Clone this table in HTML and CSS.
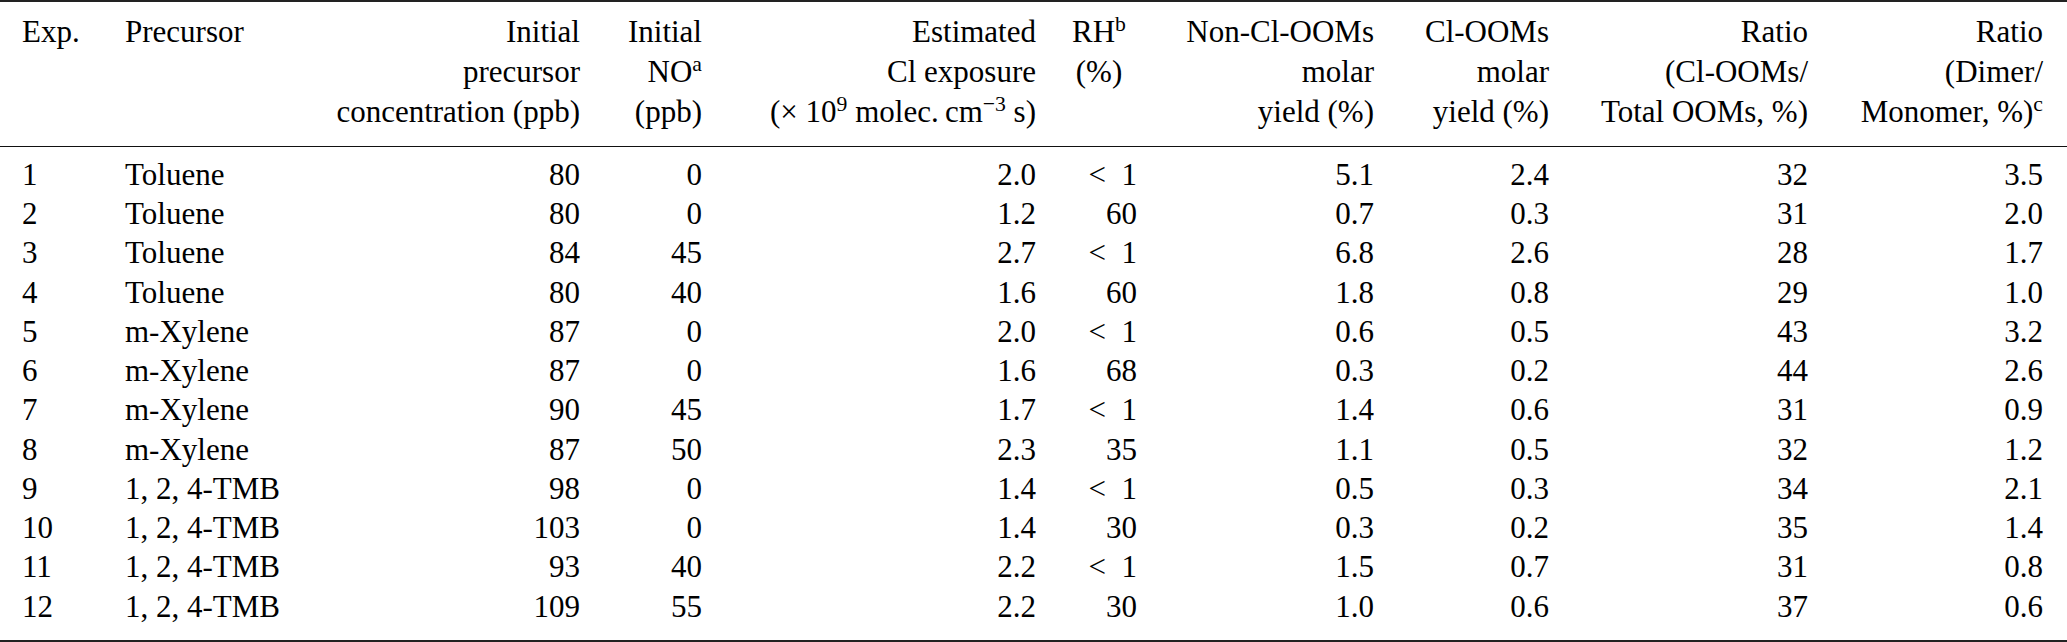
FILE: index.html
```html
<!DOCTYPE html>
<html lang="en">
<head>
<meta charset="utf-8">
<title>Table</title>
<link rel="stylesheet" href="styles.css">
</head>
<body>
<table class="tbl">
  <thead>
    <tr>
      <th class="c1 l">Exp.</th>
      <th class="c2 l">Precursor</th>
      <th class="c3">Initial<br>precursor<br>concentration (ppb)</th>
      <th class="c4">Initial<br>NO<sup>a</sup><br>(ppb)</th>
      <th class="c5">Estimated<br>Cl exposure<br>(× 10<sup>9</sup> molec.&#8201;cm<sup>−3</sup> s)</th>
      <th class="c6">RH<sup>b</sup><br>(%)</th>
      <th class="c7">Non-Cl-OOMs<br>molar<br>yield (%)</th>
      <th class="c8">Cl-OOMs<br>molar<br>yield (%)</th>
      <th class="c9">Ratio<br>(Cl-OOMs/<br>Total OOMs, %)</th>
      <th class="c10">Ratio<br>(Dimer/<br>Monomer, %)<sup>c</sup></th>
    </tr>
  </thead>
  <tbody>
    <tr><td class="l">1</td><td class="l">Toluene</td><td>80</td><td>0</td><td>2.0</td><td>&lt;&ensp;1</td><td>5.1</td><td>2.4</td><td>32</td><td>3.5</td></tr>
    <tr><td class="l">2</td><td class="l">Toluene</td><td>80</td><td>0</td><td>1.2</td><td>60</td><td>0.7</td><td>0.3</td><td>31</td><td>2.0</td></tr>
    <tr><td class="l">3</td><td class="l">Toluene</td><td>84</td><td>45</td><td>2.7</td><td>&lt;&ensp;1</td><td>6.8</td><td>2.6</td><td>28</td><td>1.7</td></tr>
    <tr><td class="l">4</td><td class="l">Toluene</td><td>80</td><td>40</td><td>1.6</td><td>60</td><td>1.8</td><td>0.8</td><td>29</td><td>1.0</td></tr>
    <tr><td class="l">5</td><td class="l">m-Xylene</td><td>87</td><td>0</td><td>2.0</td><td>&lt;&ensp;1</td><td>0.6</td><td>0.5</td><td>43</td><td>3.2</td></tr>
    <tr><td class="l">6</td><td class="l">m-Xylene</td><td>87</td><td>0</td><td>1.6</td><td>68</td><td>0.3</td><td>0.2</td><td>44</td><td>2.6</td></tr>
    <tr><td class="l">7</td><td class="l">m-Xylene</td><td>90</td><td>45</td><td>1.7</td><td>&lt;&ensp;1</td><td>1.4</td><td>0.6</td><td>31</td><td>0.9</td></tr>
    <tr><td class="l">8</td><td class="l">m-Xylene</td><td>87</td><td>50</td><td>2.3</td><td>35</td><td>1.1</td><td>0.5</td><td>32</td><td>1.2</td></tr>
    <tr><td class="l">9</td><td class="l">1, 2, 4-TMB</td><td>98</td><td>0</td><td>1.4</td><td>&lt;&ensp;1</td><td>0.5</td><td>0.3</td><td>34</td><td>2.1</td></tr>
    <tr><td class="l">10</td><td class="l">1, 2, 4-TMB</td><td>103</td><td>0</td><td>1.4</td><td>30</td><td>0.3</td><td>0.2</td><td>35</td><td>1.4</td></tr>
    <tr><td class="l">11</td><td class="l">1, 2, 4-TMB</td><td>93</td><td>40</td><td>2.2</td><td>&lt;&ensp;1</td><td>1.5</td><td>0.7</td><td>31</td><td>0.8</td></tr>
    <tr><td class="l">12</td><td class="l">1, 2, 4-TMB</td><td>109</td><td>55</td><td>2.2</td><td>30</td><td>1.0</td><td>0.6</td><td>37</td><td>0.6</td></tr>
  </tbody>
</table>
</body>
</html>
```

FILE: styles.css
```css
html, body {
  margin: 0;
  padding: 0;
  background: #ffffff;
}

body {
  font-family: "Liberation Serif", "Times New Roman", serif;
  font-size: 31px;
  color: #000000;
}

.tbl {
  width: 2067px;
  table-layout: fixed;
  border-collapse: separate;
  border-spacing: 0;
  border-top: 2px solid #222222;
  border-bottom: 2px solid #222222;
}

th, td {
  padding: 0;
  text-align: right;
  font-weight: normal;
  white-space: nowrap;
  box-sizing: border-box;
}

.l { text-align: left; }

th {
  vertical-align: top;
  line-height: 40px;
  padding-top: 10px;
  padding-bottom: 13.7px;
  border-bottom: 1px solid #111111;
}

td {
  line-height: 39.25px;
  vertical-align: top;
}

th:first-child, td:first-child { padding-left: 22px; }
th:last-child, td:last-child { padding-right: 24px; }

tbody tr:first-child td { padding-top: 8.2px; }
tbody tr:last-child td { padding-bottom: 14.2px; }

.c1 { width: 125px; }
.c2 { width: 195px; }
.c3 { width: 260px; }
.c4 { width: 122px; }
.c5 { width: 334px; }
.c6 { width: 101px; padding-left: 25px; text-align: center; }
.c7 { width: 237px; }
.c8 { width: 175px; }
.c9 { width: 259px; }
.c10 { width: 259px; }

sup {
  font-size: 0.7em;
  line-height: 0;
  vertical-align: 11px;
}
```
